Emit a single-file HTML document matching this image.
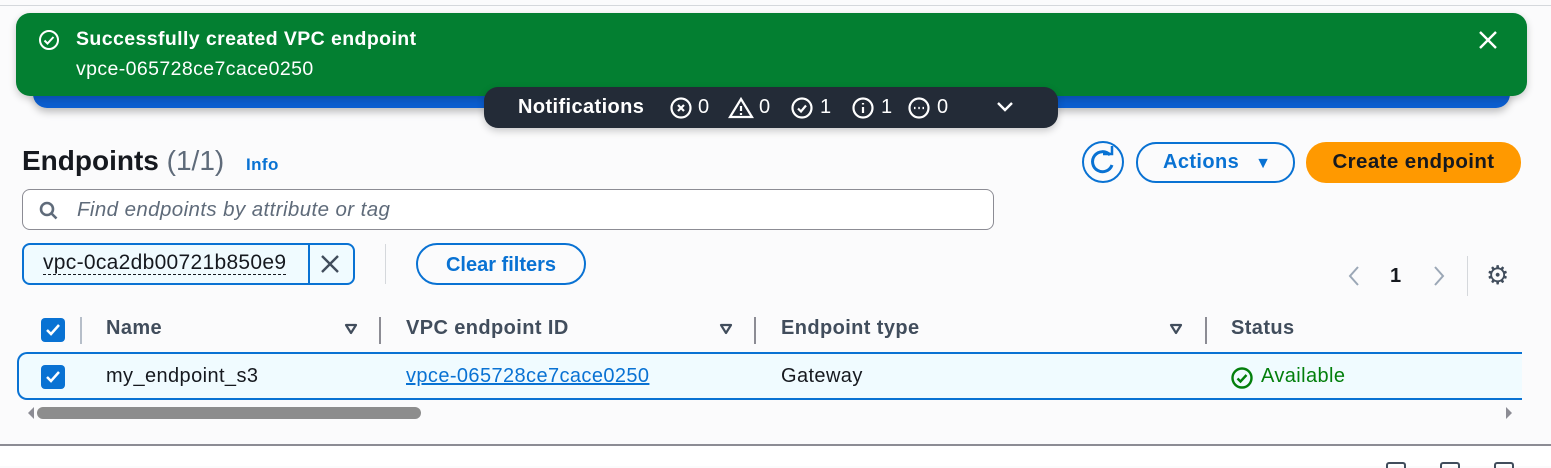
<!DOCTYPE html>
<html><head><style>
*{box-sizing:border-box;margin:0;padding:0}
body{width:1551px;height:466px;overflow:hidden;background:#fbfbfc;font-family:"Liberation Sans",sans-serif;color:#16191f;position:relative;letter-spacing:0.4px}
.a{position:absolute;white-space:nowrap}
.b{font-weight:bold}
</style></head><body>
<div class="a" style="left:0;top:5px;width:1551px;height:1px;background:#d5d8dc"></div>
<div class="a" style="left:33px;top:80px;width:1477px;height:28px;background:#0b5ed0;border-radius:0 0 14px 14px;box-shadow:0 4px 8px rgba(0,0,0,.25)"></div>
<div class="a" style="left:16px;top:13px;width:1511px;height:83px;background:#037f31;border-radius:14px;box-shadow:0 3px 8px rgba(0,0,0,.2)"></div>
<svg class="a" style="left:38px;top:29px" width="22" height="22" viewBox="0 0 22 22"><circle cx="11" cy="11" r="9" fill="none" stroke="#fff" stroke-width="2"/><path d="M6.5 11.5l3 3 6-6.5" fill="none" stroke="#fff" stroke-width="2"/></svg>
<div class="a b" style="left:76px;top:28px;color:#fff;font-size:19.5px">Successfully created VPC endpoint</div>
<div class="a" style="left:76px;top:58px;color:#fff;font-size:19.5px">vpce-065728ce7cace0250</div>
<svg class="a" style="left:1477px;top:29px" width="22" height="22" viewBox="0 0 22 22"><path d="M3 3l16 16M19 3L3 19" stroke="#fff" stroke-width="2.4"/></svg>
<div class="a" style="left:484px;top:87px;width:574px;height:41px;background:#232b37;border-radius:14px;color:#fff;font-size:20px;box-shadow:0 3px 8px rgba(0,0,0,.2)">
<span class="a b" style="left:34px;top:9px">Notifications</span>
<svg class="a" style="left:185px;top:9px" width="300" height="24" viewBox="0 0 300 24" fill="none" stroke="#fff" stroke-width="2.2">
<circle cx="12" cy="12" r="9.5"/><path d="M9 9l6 6M15 9l-6 6"/>
<path d="M72 3L61 21h22z"/><path d="M72 10v5M72 17v2"/>
<circle cx="133" cy="12" r="9.5"/><path d="M129 12.5l3 3 5-6"/>
<circle cx="194" cy="12" r="9.5"/><path d="M194 11v6M194 7v1.5"/>
<circle cx="250" cy="12" r="9.5"/><path d="M245 12h1.5M249.3 12h1.5M253.5 12h1.5"/>
</svg>
<span class="a" style="left:214px;top:9px">0</span>
<span class="a" style="left:275px;top:9px">0</span>
<span class="a" style="left:336px;top:9px">1</span>
<span class="a" style="left:397px;top:9px">1</span>
<span class="a" style="left:453px;top:9px">0</span>
<svg class="a" style="left:512px;top:13px" width="18" height="14" viewBox="0 0 18 14"><path d="M2 3l7 7 7-7" fill="none" stroke="#fff" stroke-width="2.4"/></svg>
</div>
<div class="a b" style="left:22px;top:145px;font-size:28px;letter-spacing:0">Endpoints <span style="font-weight:normal;color:#5f6b7a">(1/1)</span></div>
<div class="a b" style="left:246px;top:155px;font-size:17px;color:#0972d3">Info</div>
<svg class="a" style="left:1081px;top:140px" width="44" height="44" viewBox="0 0 44 44" fill="none" stroke="#0972d3"><circle cx="22" cy="22" r="20" stroke-width="2"/><path d="M29 15a10 10 0 1 0 2 10" stroke-width="3"/><path d="M22 14h9v-8" stroke-width="2.5"/></svg>
<div class="a b" style="left:1136px;top:142px;width:159px;height:41px;border:2px solid #0972d3;border-radius:20px;color:#0972d3;font-size:20px;padding:7px 0 0 25px">Actions <span style="font-size:16px;margin-left:10px">▼</span></div>
<div class="a b" style="left:1306px;top:142px;width:215px;height:41px;background:#ff9900;border-radius:20px;font-size:20.5px;text-align:center;padding-top:8px">Create endpoint</div>
<div class="a" style="left:22px;top:189px;width:972px;height:41px;border:1px solid #8c8c94;border-radius:8px;background:#fff"></div>
<svg class="a" style="left:38px;top:200px" width="22" height="22" viewBox="0 0 22 22" fill="none" stroke="#5f6b7a" stroke-width="2.6"><circle cx="9" cy="9" r="6"/><path d="M13.5 13.5l5 5"/></svg>
<div class="a" style="left:77px;top:198px;font-size:20.5px;font-style:italic;color:#5f6b7a">Find endpoints by attribute or tag</div>
<div class="a" style="left:22px;top:243px;width:333px;height:42px;border:2px solid #0972d3;border-radius:8px;background:#f0fbff"></div>
<div class="a" style="left:308px;top:243px;width:2px;height:42px;background:#0972d3"></div>
<div class="a" style="left:43px;top:252px;font-size:21px;border-bottom:1px dashed #16191f;line-height:22px;letter-spacing:0.3px">vpc-0ca2db00721b850e9</div>
<svg class="a" style="left:320px;top:254px" width="20" height="20" viewBox="0 0 20 20"><path d="M2 2l16 16M18 2L2 18" stroke="#414d5c" stroke-width="2.4"/></svg>
<div class="a" style="left:385px;top:244px;width:1px;height:40px;background:#d5d8dc"></div>
<div class="a b" style="left:416px;top:243px;width:170px;height:42px;border:2px solid #0972d3;border-radius:21px;color:#0972d3;font-size:20px;text-align:center;padding-top:9px;letter-spacing:0">Clear filters</div>
<svg class="a" style="left:1347px;top:265px" width="14" height="22" viewBox="0 0 14 22"><path d="M11 2L3 11l8 9" fill="none" stroke="#9ba7b6" stroke-width="2"/></svg>
<div class="a b" style="left:1390px;top:265px;font-size:20px">1</div>
<svg class="a" style="left:1432px;top:265px" width="14" height="22" viewBox="0 0 14 22"><path d="M3 2l8 9-8 9" fill="none" stroke="#9ba7b6" stroke-width="2"/></svg>
<div class="a" style="left:1467px;top:256px;width:1px;height:40px;background:#d5d8dc"></div>
<div class="a" style="left:1486px;top:260px;font-size:26px;color:#414d5c">⚙</div>
<!-- header -->
<div class="a" style="left:41px;top:318px;width:24px;height:24px;background:#0972d3;border-radius:4px"></div>
<svg class="a" style="left:41px;top:318px" width="24" height="24"><path d="M6 12l4 4 8-9" fill="none" stroke="#fff" stroke-width="2.5"/></svg>
<div class="a" style="left:80px;top:317px;width:2px;height:27px;background:#b6bec9"></div>
<div class="a b" style="left:106px;top:317px;font-size:20px;color:#414d5c">Name</div>
<svg class="a" style="left:344px;top:323px" width="14" height="12" viewBox="0 0 14 12"><path d="M2 2h10L7 10z" fill="none" stroke="#414d5c" stroke-width="2.2" stroke-linejoin="round"/></svg>
<div class="a" style="left:379px;top:317px;width:2px;height:27px;background:#8c8c94"></div>
<div class="a b" style="left:406px;top:317px;font-size:20px;color:#414d5c">VPC endpoint ID</div>
<svg class="a" style="left:719px;top:323px" width="14" height="12" viewBox="0 0 14 12"><path d="M2 2h10L7 10z" fill="none" stroke="#414d5c" stroke-width="2.2" stroke-linejoin="round"/></svg>
<div class="a" style="left:754px;top:317px;width:2px;height:27px;background:#8c8c94"></div>
<div class="a b" style="left:781px;top:317px;font-size:20px;color:#414d5c">Endpoint type</div>
<svg class="a" style="left:1169px;top:323px" width="14" height="12" viewBox="0 0 14 12"><path d="M2 2h10L7 10z" fill="none" stroke="#414d5c" stroke-width="2.2" stroke-linejoin="round"/></svg>
<div class="a" style="left:1205px;top:317px;width:2px;height:27px;background:#8c8c94"></div>
<div class="a b" style="left:1231px;top:317px;font-size:20px;color:#414d5c">Status</div>
<!-- row -->
<div class="a" style="left:17px;top:352px;width:1505px;height:48px;background:#f0fbff;border:2px solid #0972d3;border-right:none;border-radius:10px 0 0 10px"></div>
<div class="a" style="left:41px;top:365px;width:24px;height:24px;background:#0972d3;border-radius:4px"></div>
<svg class="a" style="left:41px;top:365px" width="24" height="24"><path d="M6 12l4 4 8-9" fill="none" stroke="#fff" stroke-width="2.5"/></svg>
<div class="a" style="left:106px;top:365px;font-size:20px">my_endpoint_s3</div>
<div class="a" style="left:406px;top:365px;font-size:20px;color:#0972d3;text-decoration:underline">vpce-065728ce7cace0250</div>
<div class="a" style="left:781px;top:365px;font-size:20px">Gateway</div>
<svg class="a" style="left:1230px;top:366px" width="24" height="24" viewBox="0 0 24 24" fill="none" stroke="#037f0c" stroke-width="2.4"><circle cx="12" cy="12" r="9.5"/><path d="M7.5 12.5l3 3 6-6.5"/></svg>
<div class="a" style="left:1261px;top:365px;font-size:20px;color:#037f0c">Available</div>
<div class="a" style="left:28px;top:407px;width:0;height:0;border-top:6px solid transparent;border-bottom:6px solid transparent;border-right:6px solid #8c8c94"></div>
<div class="a" style="left:37px;top:407px;width:384px;height:12px;background:#8d8d8d;border-radius:6px"></div>
<div class="a" style="left:1506px;top:407px;width:0;height:0;border-top:6px solid transparent;border-bottom:6px solid transparent;border-left:6px solid #8c8c94"></div>
<div class="a" style="left:0;top:444px;width:1551px;height:2px;background:#8c8c94"></div>
<div class="a" style="left:0;top:446px;width:1551px;height:20px;background:#fff"></div>
<div class="a" style="left:1386px;top:462px;width:20px;height:6px;border:2px solid #414d5c;border-bottom:none;border-radius:3px 3px 0 0"></div>
<div class="a" style="left:1440px;top:462px;width:20px;height:6px;border:2px solid #414d5c;border-bottom:none;border-radius:3px 3px 0 0"></div>
<div class="a" style="left:1494px;top:462px;width:20px;height:6px;border:2px solid #414d5c;border-bottom:none;border-radius:3px 3px 0 0"></div>
</body></html>
